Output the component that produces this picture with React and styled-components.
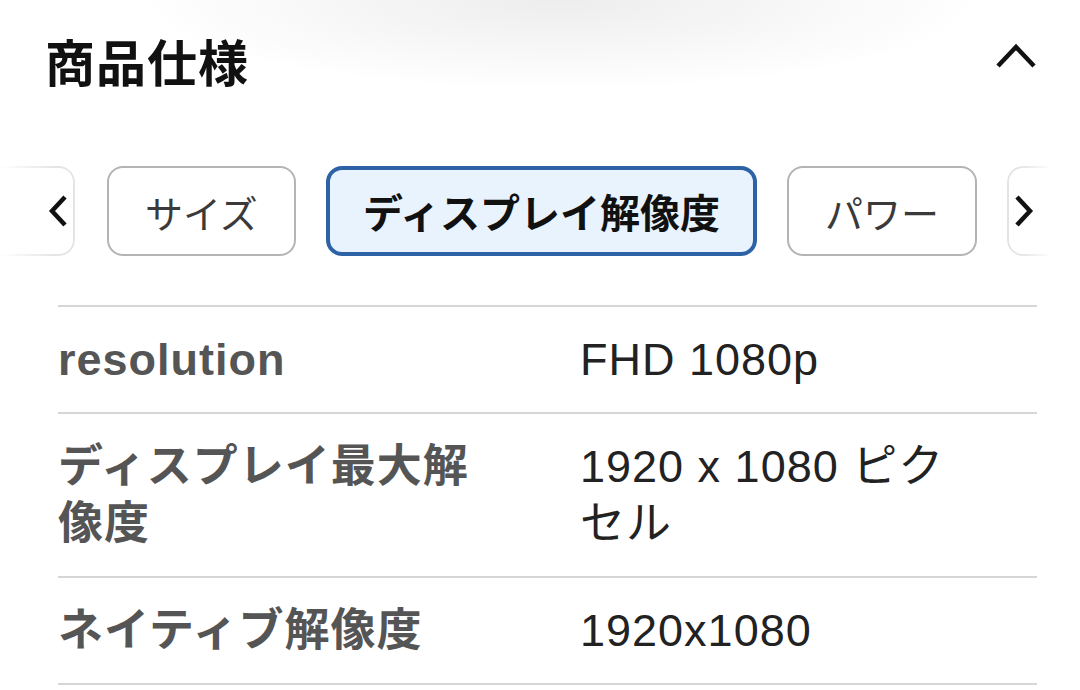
import React from 'react';
import styled, { createGlobalStyle, css } from 'styled-components';

const GlobalStyle = createGlobalStyle`
  body {
    margin: 0;
    background: #fff;
    font-family: 'Liberation Sans', 'Noto Sans CJK JP', sans-serif;
  }
`;

const Page = styled.div`
  width: 1080px;
  height: 690px;
  overflow: hidden;
  background: #fff;
`;

const Header = styled.div`
  height: 120px;
  padding: 0 43px 0 45px;
  display: flex;
  align-items: center;
  justify-content: space-between;
  background: radial-gradient(ellipse 420px 90px at 560px 0, #ededed, rgba(255, 255, 255, 0));
`;

const Title = styled.h2`
  margin: 0;
  font-family: 'Noto Sans CJK JP', sans-serif;
  font-size: 50px;
  font-weight: 700;
  color: #111;
  letter-spacing: 1px;
`;

const IconButton = styled.button`
  border: 0;
  background: none;
  padding: 0;
  margin-bottom: 8px;
  display: flex;
`;

const ChipBar = styled.div`
  margin-top: 46px;
  height: 90px;
  display: flex;
  gap: 30px;
`;

// 스크롤 양끝 - 잘린 칩 + 화살표
const EdgeButton = styled.div`
  position: relative;
  box-sizing: border-box;
  height: 90px;
  display: flex;
  align-items: center;
  ${({ side }) =>
    side === 'left'
      ? css`
          width: 75px;
          margin-right: 2px;
          justify-content: flex-end;
          padding-right: 5px;
        `
      : css`
          flex: 1;
          justify-content: flex-start;
          padding-left: 5px;
        `}
  &::before {
    content: '';
    position: absolute;
    inset: 0;
    border: 2px solid #e4e4e4;
    border-radius: 16px;
    ${({ side }) =>
      side === 'left'
        ? css`
            left: -40px;
            -webkit-mask-image: linear-gradient(to right, transparent 35%, #000 85%);
          `
        : css`
            right: -40px;
            -webkit-mask-image: linear-gradient(to right, #000 12%, transparent 40%);
          `}
  }
  svg {
    position: relative;
  }
`;

const Chip = styled.button`
  box-sizing: border-box;
  height: 90px;
  border-radius: 16px;
  font-family: 'Noto Sans CJK JP', sans-serif;
  white-space: nowrap;
  ${({ active }) =>
    active
      ? css`
          padding: 0 33px;
          border: 4px solid #2d62a6;
          background: #e9f3fd;
          color: #111;
          font-size: 40px;
          font-weight: 700;
        `
      : css`
          padding: 0 36px;
          border: 2px solid #b4b4b4;
          background: #fff;
          color: #3a3a3a;
          font-size: 38px;
          font-weight: 400;
        `}
`;

const SpecTable = styled.div`
  margin: 49px 43px 0 58px;
  border-top: 2px solid #d6d6d6;
`;

const Row = styled.div`
  display: grid;
  grid-template-columns: 522px 1fr;
  padding: 24px 0;
  border-bottom: 2px solid #d6d6d6;
`;

const Label = styled.div`
  padding-right: 92px;
  font-size: 45px;
  line-height: 57px;
  letter-spacing: 1px;
  font-weight: 700;
  color: #555;
`;

const Value = styled.div`
  padding-right: 75px;
  font-size: 45px;
  line-height: 57px;
  letter-spacing: 1px;
  color: #222;
`;

const Chevron = ({ dir }) => {
  const points = dir === 'left' ? '17,2 4,16 17,30' : '5,2 18,16 5,30';
  return (
    <svg width='22' height='32' viewBox='0 0 22 32'>
      <polyline points={points} fill='none' stroke='#111' strokeWidth='4.5' />
    </svg>
  );
};

const specs = [
  { label: 'resolution', value: 'FHD 1080p' },
  { label: 'ディスプレイ最大解像度', value: '1920 x 1080 ピクセル' },
  { label: 'ネイティブ解像度', value: '1920x1080' },
];

const App = () => {
  return (
    <Page>
      <GlobalStyle />
      <Header>
        <Title>商品仕様</Title>
        <IconButton>
          <svg width='42' height='26' viewBox='0 0 42 26'>
            <polyline points='3,23 21,4 39,23' fill='none' stroke='#111' strokeWidth='4.5' />
          </svg>
        </IconButton>
      </Header>
      <ChipBar>
        <EdgeButton side='left'>
          <Chevron dir='left' />
        </EdgeButton>
        <Chip>サイズ</Chip>
        <Chip active>ディスプレイ解像度</Chip>
        <Chip>パワー</Chip>
        <EdgeButton side='right'>
          <Chevron dir='right' />
        </EdgeButton>
      </ChipBar>
      <SpecTable>
        {specs.map((s) => (
          <Row key={s.label}>
            <Label>{s.label}</Label>
            <Value>{s.value}</Value>
          </Row>
        ))}
      </SpecTable>
    </Page>
  );
};

export default App;
